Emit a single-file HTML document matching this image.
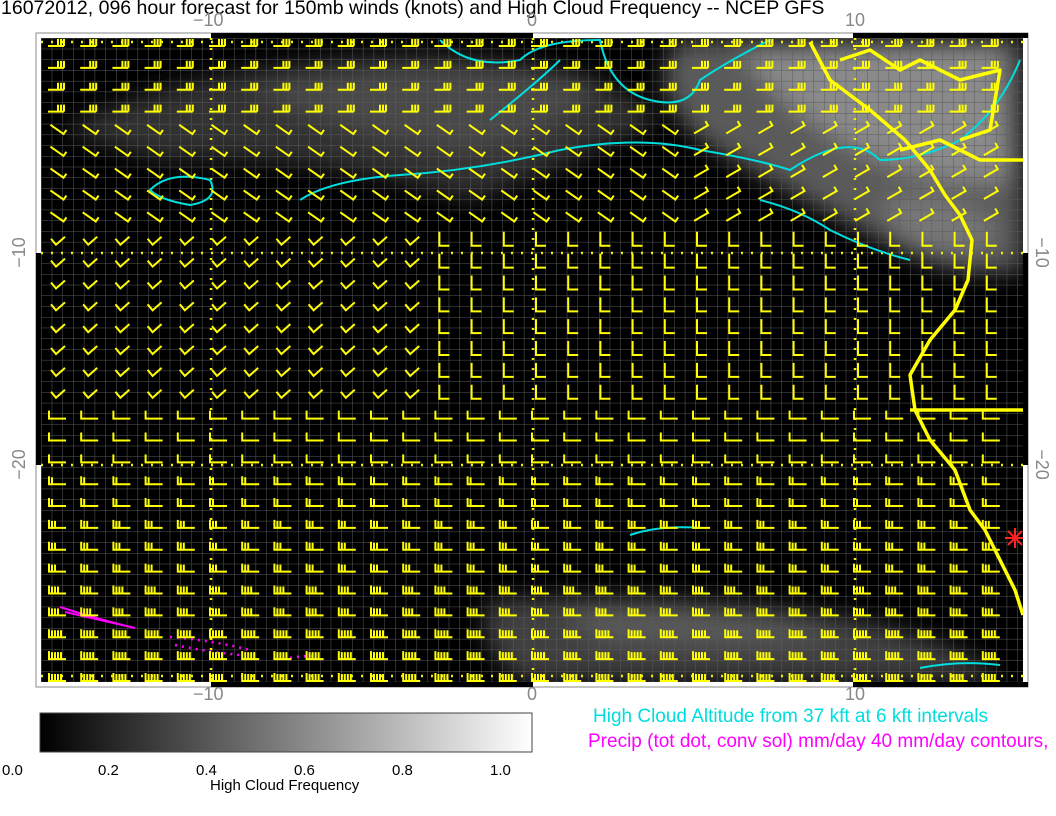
<!DOCTYPE html>
<html><head><meta charset="utf-8">
<style>
body{margin:0;background:#fff;width:1056px;height:816px;overflow:hidden;position:relative;font-family:"Liberation Sans",sans-serif}
.t{position:absolute;white-space:nowrap}
</style></head><body>
<div class="t" style="left:1px;top:-3px;font-size:19.5px;color:#000">16072012, 096 hour forecast for 150mb winds (knots) and High Cloud Frequency -- NCEP GFS</div>
<div class="t" style="left:193px;top:10px;font-size:18px;color:#888">−10</div>
<div class="t" style="left:527px;top:10px;font-size:18px;color:#888">0</div>
<div class="t" style="left:845px;top:10px;font-size:18px;color:#888">10</div>
<div class="t" style="left:193px;top:684px;font-size:18px;color:#888">−10</div>
<div class="t" style="left:527px;top:684px;font-size:18px;color:#888">0</div>
<div class="t" style="left:845px;top:684px;font-size:18px;color:#888">10</div>
<div class="t" style="left:4px;top:242px;font-size:18px;color:#888;transform:rotate(-90deg)">−10</div>
<div class="t" style="left:4px;top:454px;font-size:18px;color:#888;transform:rotate(-90deg)">−20</div>
<div class="t" style="left:1026px;top:242px;font-size:18px;color:#888;transform:rotate(90deg)">−10</div>
<div class="t" style="left:1026px;top:454px;font-size:18px;color:#888;transform:rotate(90deg)">−20</div>

<svg width="1056" height="816" style="position:absolute;left:0;top:0">
<defs>
<filter id="b" x="-20%" y="-20%" width="140%" height="140%"><feGaussianBlur stdDeviation="12"/></filter>
<linearGradient id="cb"><stop offset="0" stop-color="#000"/><stop offset="1" stop-color="#fff"/></linearGradient>
<pattern id="g" width="10.73" height="10.73" patternUnits="userSpaceOnUse" x="41" y="38"><path d="M0 0H10.73M0 0V10.73" stroke="#5a5a5a" stroke-width="1" fill="none"/></pattern>
<clipPath id="c"><rect x="41" y="38" width="982" height="644"/></clipPath>
</defs>
<rect x="36" y="33" width="992" height="654" fill="#fff" stroke="#888" stroke-width="1"/>
<rect x="211" y="33" width="322" height="5" fill="#000"/><rect x="853" y="33" width="175" height="5" fill="#000"/>
<rect x="211" y="682" width="322" height="5" fill="#000"/><rect x="853" y="682" width="175" height="5" fill="#000"/>
<rect x="36" y="253" width="5" height="212" fill="#000"/><rect x="1023" y="253" width="5" height="212" fill="#000"/>
<rect x="41" y="38" width="982" height="644" fill="#000"/>
<g clip-path="url(#c)">
<g filter="url(#b)">
<path d="M60 130 Q200 60 420 55 Q600 60 660 120 Q560 170 470 200 Q300 150 160 160 Z" fill="#333"/>
<path d="M250 90 Q420 50 600 80 Q560 140 460 150 Q330 130 250 90 Z" fill="#4a4a4a"/>
<path d="M680 40 L1023 40 L1023 270 Q960 280 900 250 Q800 200 700 140 Q640 80 680 40 Z" fill="#5a5a5a"/>
<path d="M740 50 L1000 45 L1010 180 Q930 190 860 150 Q780 110 740 50 Z" fill="#8a8a8a"/>
<path d="M880 200 Q950 180 1000 230 Q970 270 900 240 Z" fill="#777"/>
<path d="M490 600 Q700 590 860 620 Q980 650 1000 680 L520 680 Q470 640 490 600 Z" fill="#404040"/>
<path d="M560 610 Q700 600 840 635 Q760 650 600 640 Z" fill="#5a5a5a"/>
</g>
<rect x="41" y="38" width="982" height="644" fill="url(#g)"/>
<g stroke="#ee0" stroke-width="2.5" stroke-dasharray="2 8" fill="none">
<path d="M211 38V682M533 38V682M855 38V682M41 42H1023M41 253H1023M41 465H1023M41 676H1023"/>
</g>
<g stroke="#0dd" stroke-width="2" fill="none">
<path d="M440 40 Q470 70 520 60 Q540 40 600 40 Q610 90 650 100 Q690 110 700 80 Q730 60 770 40"/>
<path d="M490 120 Q540 80 560 60"/>
<path d="M150 190 Q170 170 210 180 Q220 200 190 205 Q160 200 150 190Z"/>
<path d="M300 200 Q330 180 400 175 Q480 170 560 150 Q640 135 700 150 Q760 160 790 170 Q850 130 880 160 Q920 160 960 140 Q1000 110 1020 60"/>
<path d="M760 200 Q800 210 830 230 Q870 250 910 260"/>
<path d="M630 535 Q660 525 700 528"/>
<path d="M920 668 Q960 660 1000 665"/>
</g>
<g stroke="#f0f" stroke-width="2" fill="none">
<path d="M60 607 Q100 620 135 628 Q100 620 65 612"/>
</g>
<g stroke="#f0f" stroke-width="2.5" stroke-dasharray="2 5" fill="none">
<path d="M170 637 Q210 640 250 650 M175 645 Q210 652 240 655 M290 658 Q305 655 318 657"/>
</g>
<g stroke="#ff0" stroke-width="3.5" fill="none" stroke-linejoin="round">
<path d="M810 42 L830 80 L870 110 L905 140 L930 170 L945 195 L960 215 L972 240 L968 280 L955 310 L930 340 L910 375 L915 410 L930 440 L955 470 L970 510 L985 530 L1000 560 L1015 590 L1023 615"/>
<path d="M900 150 L940 140 L980 160 L1023 160"/>
<path d="M910 410 L1023 410"/>
<path d="M840 60 L870 50 L900 70 L920 60 L960 80 L1000 70 L990 130 L960 140"/>
</g>
<g stroke="#f22" stroke-width="2"><path d="M1005 538h20M1015 528v20M1008 531l14 14M1022 531l-14 14"/></g>
<g id="barbs" stroke="#ff0" stroke-width="2" fill="none"></g>
</g>
<rect x="40" y="713" width="492" height="39" fill="url(#cb)" stroke="#444"/>
<text x="2" y="775" font-size="15" font-family="Liberation Sans">0.0</text>
<text x="98" y="775" font-size="15" font-family="Liberation Sans">0.2</text>
<text x="196" y="775" font-size="15" font-family="Liberation Sans">0.4</text>
<text x="294" y="775" font-size="15" font-family="Liberation Sans">0.6</text>
<text x="392" y="775" font-size="15" font-family="Liberation Sans">0.8</text>
<text x="490" y="775" font-size="15" font-family="Liberation Sans">1.0</text>
<text x="210" y="790" font-size="15" font-family="Liberation Sans">High Cloud Frequency</text>
<text x="593" y="722" font-size="19" fill="#0dd" font-family="Liberation Sans">High Cloud Altitude from 37 kft at 6 kft intervals</text>
<text x="588" y="747" font-size="19" fill="#f0f" font-family="Liberation Sans">Precip (tot dot, conv sol) mm/day 40 mm/day contours,</text>
</svg>
<script>
(function(){
var g=document.getElementById('barbs'),s='';
for(var r=0;r<30;r++){for(var c=0;c<30;c++){
var x=57+c*32.2,y=42+r*21.86,d='';
if(r<4){d='M'+(x-9)+' '+(y+4)+'h16';for(var k=0;k<3;k++)d+='M'+(x+7-k*3)+' '+(y+4)+'v-7';}
else if(r<9){var a=(c<20?35:-30)*Math.PI/180,ca=Math.cos(a),sa=Math.sin(a);
 d='M'+(x-8*ca)+' '+(y-8*sa)+'L'+(x+8*ca)+' '+(y+8*sa)+'l'+(5*sa)+' '+(-5*ca);}
else if(r<17){ if(c<12){d='M'+(x-6)+' '+(y)+'l5 6l9 -8';}
 else {d='M'+(x-4)+' '+(y-7)+'v14h10';}}
else{var n=Math.min(5,1+Math.floor((r-17)/2.5));d='M'+(x-9)+' '+(y+5)+'h18';
 for(var k=0;k<n;k++)d+='M'+(x-8+k*3)+' '+(y+5)+'v-'+(k==0?8:7);}
s+='<path d="'+d+'"/>';}}
g.innerHTML=s;})();
</script>
</body></html>
